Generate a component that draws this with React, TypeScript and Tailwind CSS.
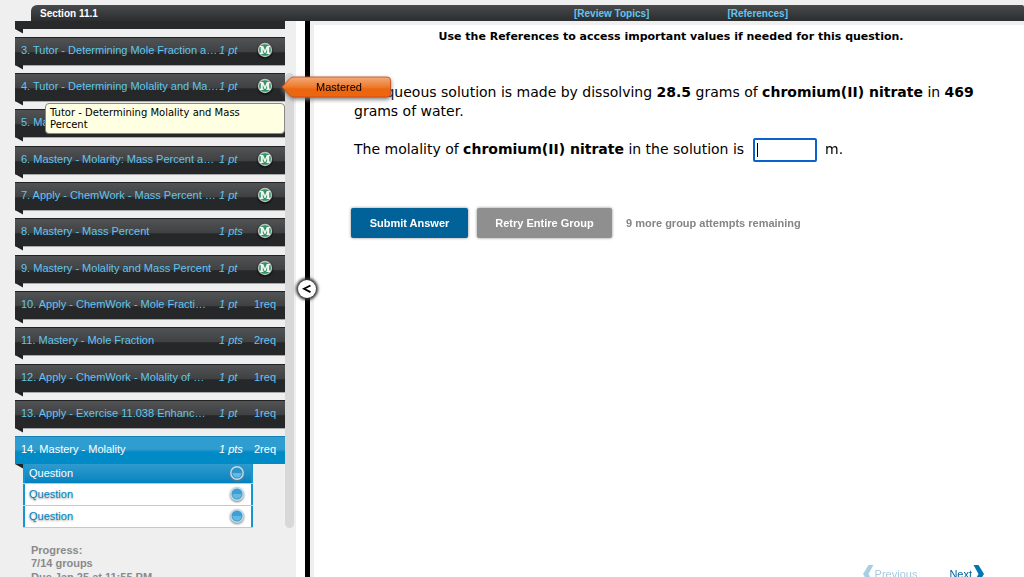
import React, { useState } from 'react';
import clsx from 'clsx';

type Item = {
  title: string;
  pts: string;
  req?: string;
  active?: boolean;
};

const items: Item[] = [
  { title: '3. Tutor - Determining Mole Fraction a…', pts: '1 pt' },
  { title: '4. Tutor - Determining Molality and Ma…', pts: '1 pt' },
  { title: '5. Ma', pts: '' },
  { title: '6. Mastery - Molarity: Mass Percent a…', pts: '1 pt' },
  { title: '7. Apply - ChemWork - Mass Percent …', pts: '1 pt' },
  { title: '8. Mastery - Mass Percent', pts: '1 pts' },
  { title: '9. Mastery - Molality and Mass Percent', pts: '1 pt' },
  { title: '10. Apply - ChemWork - Mole Fracti…', pts: '1 pt', req: '1req' },
  { title: '11. Mastery - Mole Fraction', pts: '1 pts', req: '2req' },
  { title: '12. Apply - ChemWork - Molality of …', pts: '1 pt', req: '1req' },
  { title: '13. Apply - Exercise 11.038 Enhanc…', pts: '1 pt', req: '1req' },
  { title: '14. Mastery - Molality', pts: '1 pts', req: '2req', active: true },
];

function MasteredBadge() {
  return (
    <svg viewBox="0 0 16 16" className="-mt-px h-4 w-4 drop-shadow-[0_1px_1px_#000]" role="img" aria-label="Mastered">
      <circle cx="8" cy="8" r="6.500" fill="#2f9460" stroke="#bfc4c1" strokeWidth="1.300" />
      <path d="M3 12V10.700l.8-.2V5.300L3 5.100V3.900h3.200L8 8.200l1.800-4.300H13v1.200l-.8.200v5.200l.8.200V12H9.400v-1.300l.7-.2V7L8.500 11h-1L5.800 7v3.500l.7.200V12z" fill="#f0f3f1" />
    </svg>
  );
}

function Fold() {
  return (
    <svg viewBox="0 0 8 5" className="block h-[5px] w-2" aria-hidden="true">
      <path d="M0 0H8V4.500z" fill="#202122" />
    </svg>
  );
}

function StatusDot({ active }: { active?: boolean }) {
  return (
    <svg viewBox="0 0 16 16" className="h-4 w-4 drop-shadow-[0_1px_1px_#777]" aria-hidden="true">
      <circle cx="8" cy="7" r="6.200" fill={active ? '#2d94ca' : '#3f9fd2'} stroke="#c5dcea" strokeWidth="1.400" />
      <path d="M3.500 7a4.500 4.500 0 0 0 9 0z" fill="#64b8e2" />
    </svg>
  );
}

function NavItem({ title, pts, req, active }: Item) {
  return (
    <li className="h-9 nth-[3n]:h-[37px] last:h-7!">
      <a
        href="#"
        className={clsx(
          'flex h-7 items-center border-t pb-0.5 pl-1.5 pr-1 text-[11px]',
          active
            ? 'border-[#1580b4] bg-linear-to-b from-[#2f9dd0] from-45% to-[#008bc7] to-55% text-white'
            : 'border-[#222] bg-linear-to-b from-[#505152] from-5% via-[#404142] via-50% to-[#252729] to-55% text-[#62c5f0] shadow-[0_1px_0_#aaa]'
        )}
      >
        <span className="w-[198px] shrink-0 whitespace-nowrap">{title}</span>
        <span className="w-[30px] shrink-0 whitespace-nowrap italic">{pts}</span>
        <span className="flex grow justify-center">{req ? req : <MasteredBadge />}</span>
      </a>
      <Fold />
    </li>
  );
}

function Question({ active }: { active?: boolean }) {
  return (
    <li className="border-b border-[#c8c8c8]">
      <a
        href="#"
        className={clsx(
          'flex items-center justify-between border-x-2 border-[#1496cf] pl-1 pr-1.5 text-[11px]',
          active
            ? 'h-[19px] bg-linear-to-b from-[#2e9bcf] to-[#0083bf] text-white'
            : 'h-[21px] bg-white text-[#0085c0] text-shadow-[0_1px_2px_#999]'
        )}
      >
        Question
        <StatusDot active={active} />
      </a>
    </li>
  );
}

function Sidebar() {
  return (
    <aside className="flex w-[296px] shrink-0 flex-col overflow-hidden bg-[#efefef] pl-[15px]">
      <div className="flex shrink-0">
        <div className="w-[270px]">
          <div className="h-4">
            <div className="h-2 bg-[#27292a]" />
            <Fold />
          </div>
          <ul>
            {items.map((item) => (
              <NavItem key={item.title} {...item} />
            ))}
          </ul>
          <ul className="relative ml-2 w-[230px]">
            <Question active />
            <Question />
            <Question />
          </ul>
        </div>
        <div className="mt-13 w-[9px] rounded-full bg-[#d8d8d8]" />
      </div>
      <div className="mt-4 pl-4 text-[11px] leading-[13px] font-bold text-[#8a8a8a]">
        <p>Progress:</p>
        <p>7/14 groups</p>
        <p className="mt-px whitespace-nowrap">Due Jan 25 at 11:55 PM</p>
      </div>
    </aside>
  );
}

export default function App() {
  const [answer, setAnswer] = useState('');

  return (
    <div className="relative flex h-screen flex-col overflow-hidden bg-[#efefef] pt-[5px] font-['Liberation_Sans',Arial,sans-serif] text-black">
      <header className="ml-[31px] flex h-4 shrink-0 items-center rounded-tl-md rounded-tr-xs bg-linear-to-b from-[#484a4b] to-[#2b2d2e] pl-[9px] text-[10px] font-bold text-white">
        <h1 className="w-[534px]">Section 11.1</h1>
        <nav className="flex gap-[78px] text-[#62c5f0]">
          <a href="#">[Review Topics]</a>
          <a href="#">[References]</a>
        </nav>
      </header>

      <div className="flex min-h-0 grow">
        <Sidebar />
        <div className="relative flex w-[18px] shrink-0 justify-center border-r-4 border-[#efefef] bg-white pl-[9px]">
          <div className="w-[5px] bg-black" />
          <button
            aria-label="Collapse sidebar"
            className="absolute top-[259px] left-[2px] flex h-[18px] w-[18px] items-center justify-center rounded-full bg-white shadow-[0_0_3px_2px_#333]"
          >
            <svg viewBox="0 0 10 10" className="h-[10px] w-[10px]" aria-hidden="true">
              <path d="M8.500 1.500L2 4.800L8.500 8.100" fill="none" stroke="#000" strokeWidth="1.800" />
            </svg>
          </button>
        </div>

        <main className="flex grow flex-col border-t-4 border-[#efefef] bg-white pl-10 pr-9 font-['DejaVu_Sans',Verdana,sans-serif]">
          <p className="pt-1 text-center text-[11px] leading-4 font-bold">
            Use the References to access important values if needed for this question.
          </p>
          <p className="mt-[38px] text-[14px] leading-[19px]">
            An aqueous solution is made by dissolving <b>28.5</b> grams of <b>chromium(II) nitrate</b> in <b>469</b> grams of water.
          </p>
          <p className="mt-4 text-[14px] leading-6">
            <label htmlFor="molality">
              The molality of <b>chromium(II) nitrate</b> in the solution is{' '}
            </label>
            <input
              id="molality"
              autoFocus
              value={answer}
              onChange={(e) => setAnswer(e.target.value)}
              className="mx-1 h-6 w-16 rounded-xs border-2 border-[#0a62cc] bg-white bg-linear-to-b from-black to-black bg-size-[1px_14px] bg-position-[2px_center] bg-no-repeat px-0.5 align-middle caret-transparent outline-none"
            />{' '}
            m.
          </p>
          <div className="-ml-[3px] mt-[46px] flex items-center font-['Liberation_Sans',Arial,sans-serif] text-[11px] font-bold">
            <button className="h-[30px] w-[117px] rounded-xs bg-[#006298] text-white shadow-[0_0_3px_#888]">Submit Answer</button>
            <button className="ml-[9px] h-[30px] w-[135px] rounded-xs bg-[#8f8f8f] text-white shadow-[0_0_3px_#888]">
              Retry Entire Group
            </button>
            <span className="ml-3.5 text-[#858585]">9 more group attempts remaining</span>
          </div>
          <nav className="mt-auto flex h-3 items-start justify-end gap-8 pr-1 font-['Liberation_Sans',Arial,sans-serif] text-[11px] leading-[18px] text-[#00639b]">
            <a href="#" className="flex gap-px opacity-35">
              <svg viewBox="0 0 11 18" className="h-[18px] w-[11px]" aria-hidden="true">
                <path d="M5.500 0H10.500L5.500 9L10.500 18H5.500L0 9z" fill="#0077b3" />
              </svg>
              Previous
            </a>
            <a href="#" className="flex gap-px">
              Next
              <svg viewBox="0 0 11 18" className="h-[18px] w-[11px]" aria-hidden="true">
                <path d="M5.500 0H.5L5.500 9L.5 18H5.500L11 9z" fill="#0077b3" />
              </svg>
            </a>
          </nav>
        </main>
      </div>

      <div className="absolute top-[103px] left-[45px] w-[240px] rounded-sm border border-[#888] bg-[#ffffe1] px-1 pt-[3px] pb-0.5 font-['DejaVu_Sans',Verdana,sans-serif] text-[10px] leading-3">
        Tutor - Determining Molality and Mass Percent
      </div>
      <div className="absolute top-[76px] left-[281px] flex h-[22px] w-[110px] items-center justify-center text-[11px] drop-shadow-[0_2px_2px_#777]">
        <svg viewBox="0 0 110 22" className="absolute inset-0 h-full w-full" aria-hidden="true">
          <defs>
            <linearGradient id="tag" x1="0" y1="0" x2="0" y2="1">
              <stop offset="0" stopColor="#f2ab7c" />
              <stop offset=".5" stopColor="#ee7a2c" />
              <stop offset=".6" stopColor="#ec6610" />
              <stop offset="1" stopColor="#ec6610" />
            </linearGradient>
          </defs>
          <path d="M1 11L9 2.500Q10.500 1 13 1H106Q109.500 1 109.500 4V18Q109.500 21 106 21H13Q10.500 21 9 19.500z" fill="url(#tag)" stroke="#c4491a" strokeWidth=".8" />
        </svg>
        <span className="relative pl-1.5">Mastered</span>
      </div>
    </div>
  );
}
